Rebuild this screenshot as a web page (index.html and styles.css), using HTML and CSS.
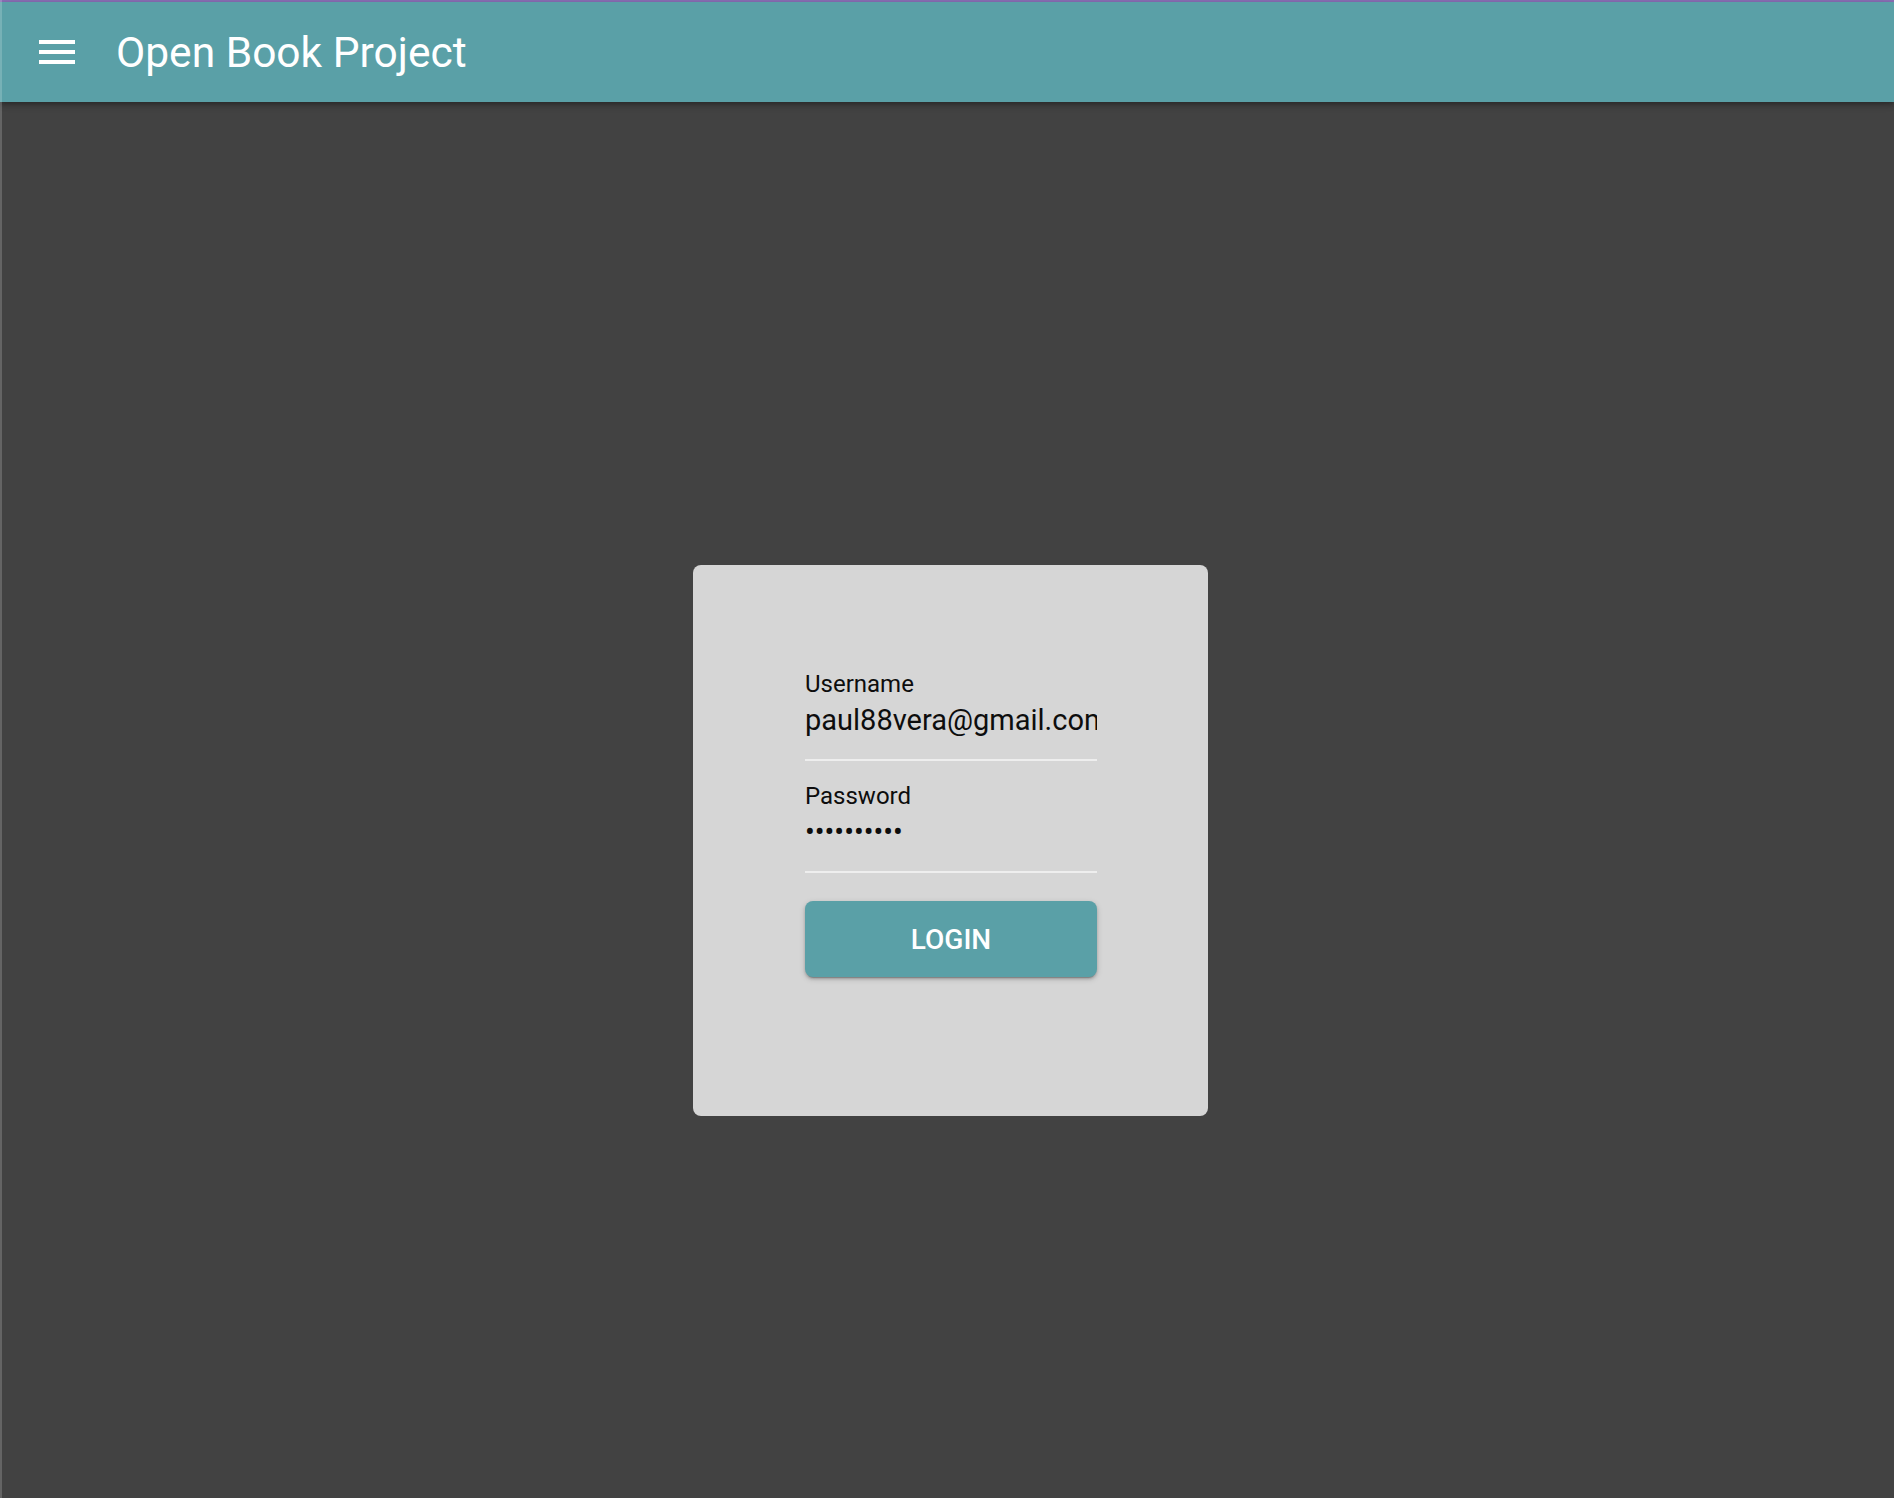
FILE: index.html
```html
<!DOCTYPE html>
<html lang="en">
<head>
<meta charset="utf-8">
<title>Open Book Project</title>
<link rel="stylesheet" href="styles.css">
</head>
<body>
<div class="edge"></div>
<div class="topline"></div>
<header class="appbar">
  <button class="menu-btn" type="button" aria-label="Menu">
    <svg width="48" height="48" viewBox="0 0 24 24"><path fill="#fff" d="M3 6h18v2H3zM3 11h18v2H3zM3 16h18v2H3z"/></svg>
  </button>
  <h1 class="title">Open Book Project</h1>
</header>
<main class="main">
  <form class="card">
    <div class="field">
      <label class="field-label" for="user">Username</label>
      <input class="field-input" id="user" type="text" value="paul88vera@gmail.com" readonly>
    </div>
    <div class="field field-pass">
      <label class="field-label" for="pass">Password</label>
      <input class="field-input" id="pass" type="password" value="0123456789" readonly>
    </div>
    <button class="login-btn" type="button">LOGIN</button>
  </form>
</main>
</body>
</html>
```

FILE: styles.css
```css
html, body {
  margin: 0;
  padding: 0;
}
body {
  background: #424242;
  font-family: Roboto, "Liberation Sans", sans-serif;
  min-height: 100vh;
  position: relative;
  overflow: hidden;
}
.edge {
  position: absolute;
  left: 0;
  top: 0;
  bottom: 0;
  width: 2px;
  background: rgba(255, 255, 255, 0.18);
  z-index: 5;
}
.topline {
  height: 2px;
  background: #8a6fb6;
}
.appbar {
  height: 100px;
  background: #5aa0a7;
  display: flex;
  align-items: center;
  position: relative;
  z-index: 2;
  box-shadow: 0 2px 4px -1px rgba(0,0,0,.2), 0 4px 5px 0 rgba(0,0,0,.14), 0 1px 10px 0 rgba(0,0,0,.12);
}
.menu-btn {
  margin-left: 33px;
  width: 48px;
  height: 48px;
  padding: 0;
  border: none;
  background: transparent;
  display: flex;
}
.title {
  margin: 0 0 0 35px;
  font-size: 42.5px;
  font-weight: 400;
  color: #fff;
}
.main {
  display: flex;
  justify-content: center;
  padding: 463px 0 0 7px;
}
.card {
  width: 515px;
  height: 551px;
  box-sizing: border-box;
  padding: 105px 111px 0 112px;
  background: #d6d6d6;
  border-radius: 8px;
  display: flex;
  flex-direction: column;
}
.field {
  display: flex;
  flex-direction: column;
  border-bottom: 2px solid #eeeeee;
  padding-bottom: 22px;
}
.field-pass {
  margin-top: 21px;
}
.field-label {
  font-size: 24px;
  line-height: 28px;
  color: #0d0d0d;
}
.field-input {
  margin-top: 5px;
  height: 34px;
  padding: 0;
  border: none;
  outline: none;
  background: transparent;
  font-family: Roboto, "Liberation Sans", sans-serif;
  font-size: 29px;
  color: #0d0d0d;
  width: 100%;
}
.login-btn {
  margin-top: 28px;
  height: 76px;
  border: none;
  border-radius: 8px;
  background: #5aa0a7;
  color: #fff;
  font-family: Roboto, "Liberation Sans", sans-serif;
  font-size: 28px;
  font-weight: 500;
  box-shadow: 0 3px 1px -2px rgba(0,0,0,.2), 0 2px 3px 0 rgba(0,0,0,.18), 0 2px 6px 0 rgba(0,0,0,.15);
}
```
